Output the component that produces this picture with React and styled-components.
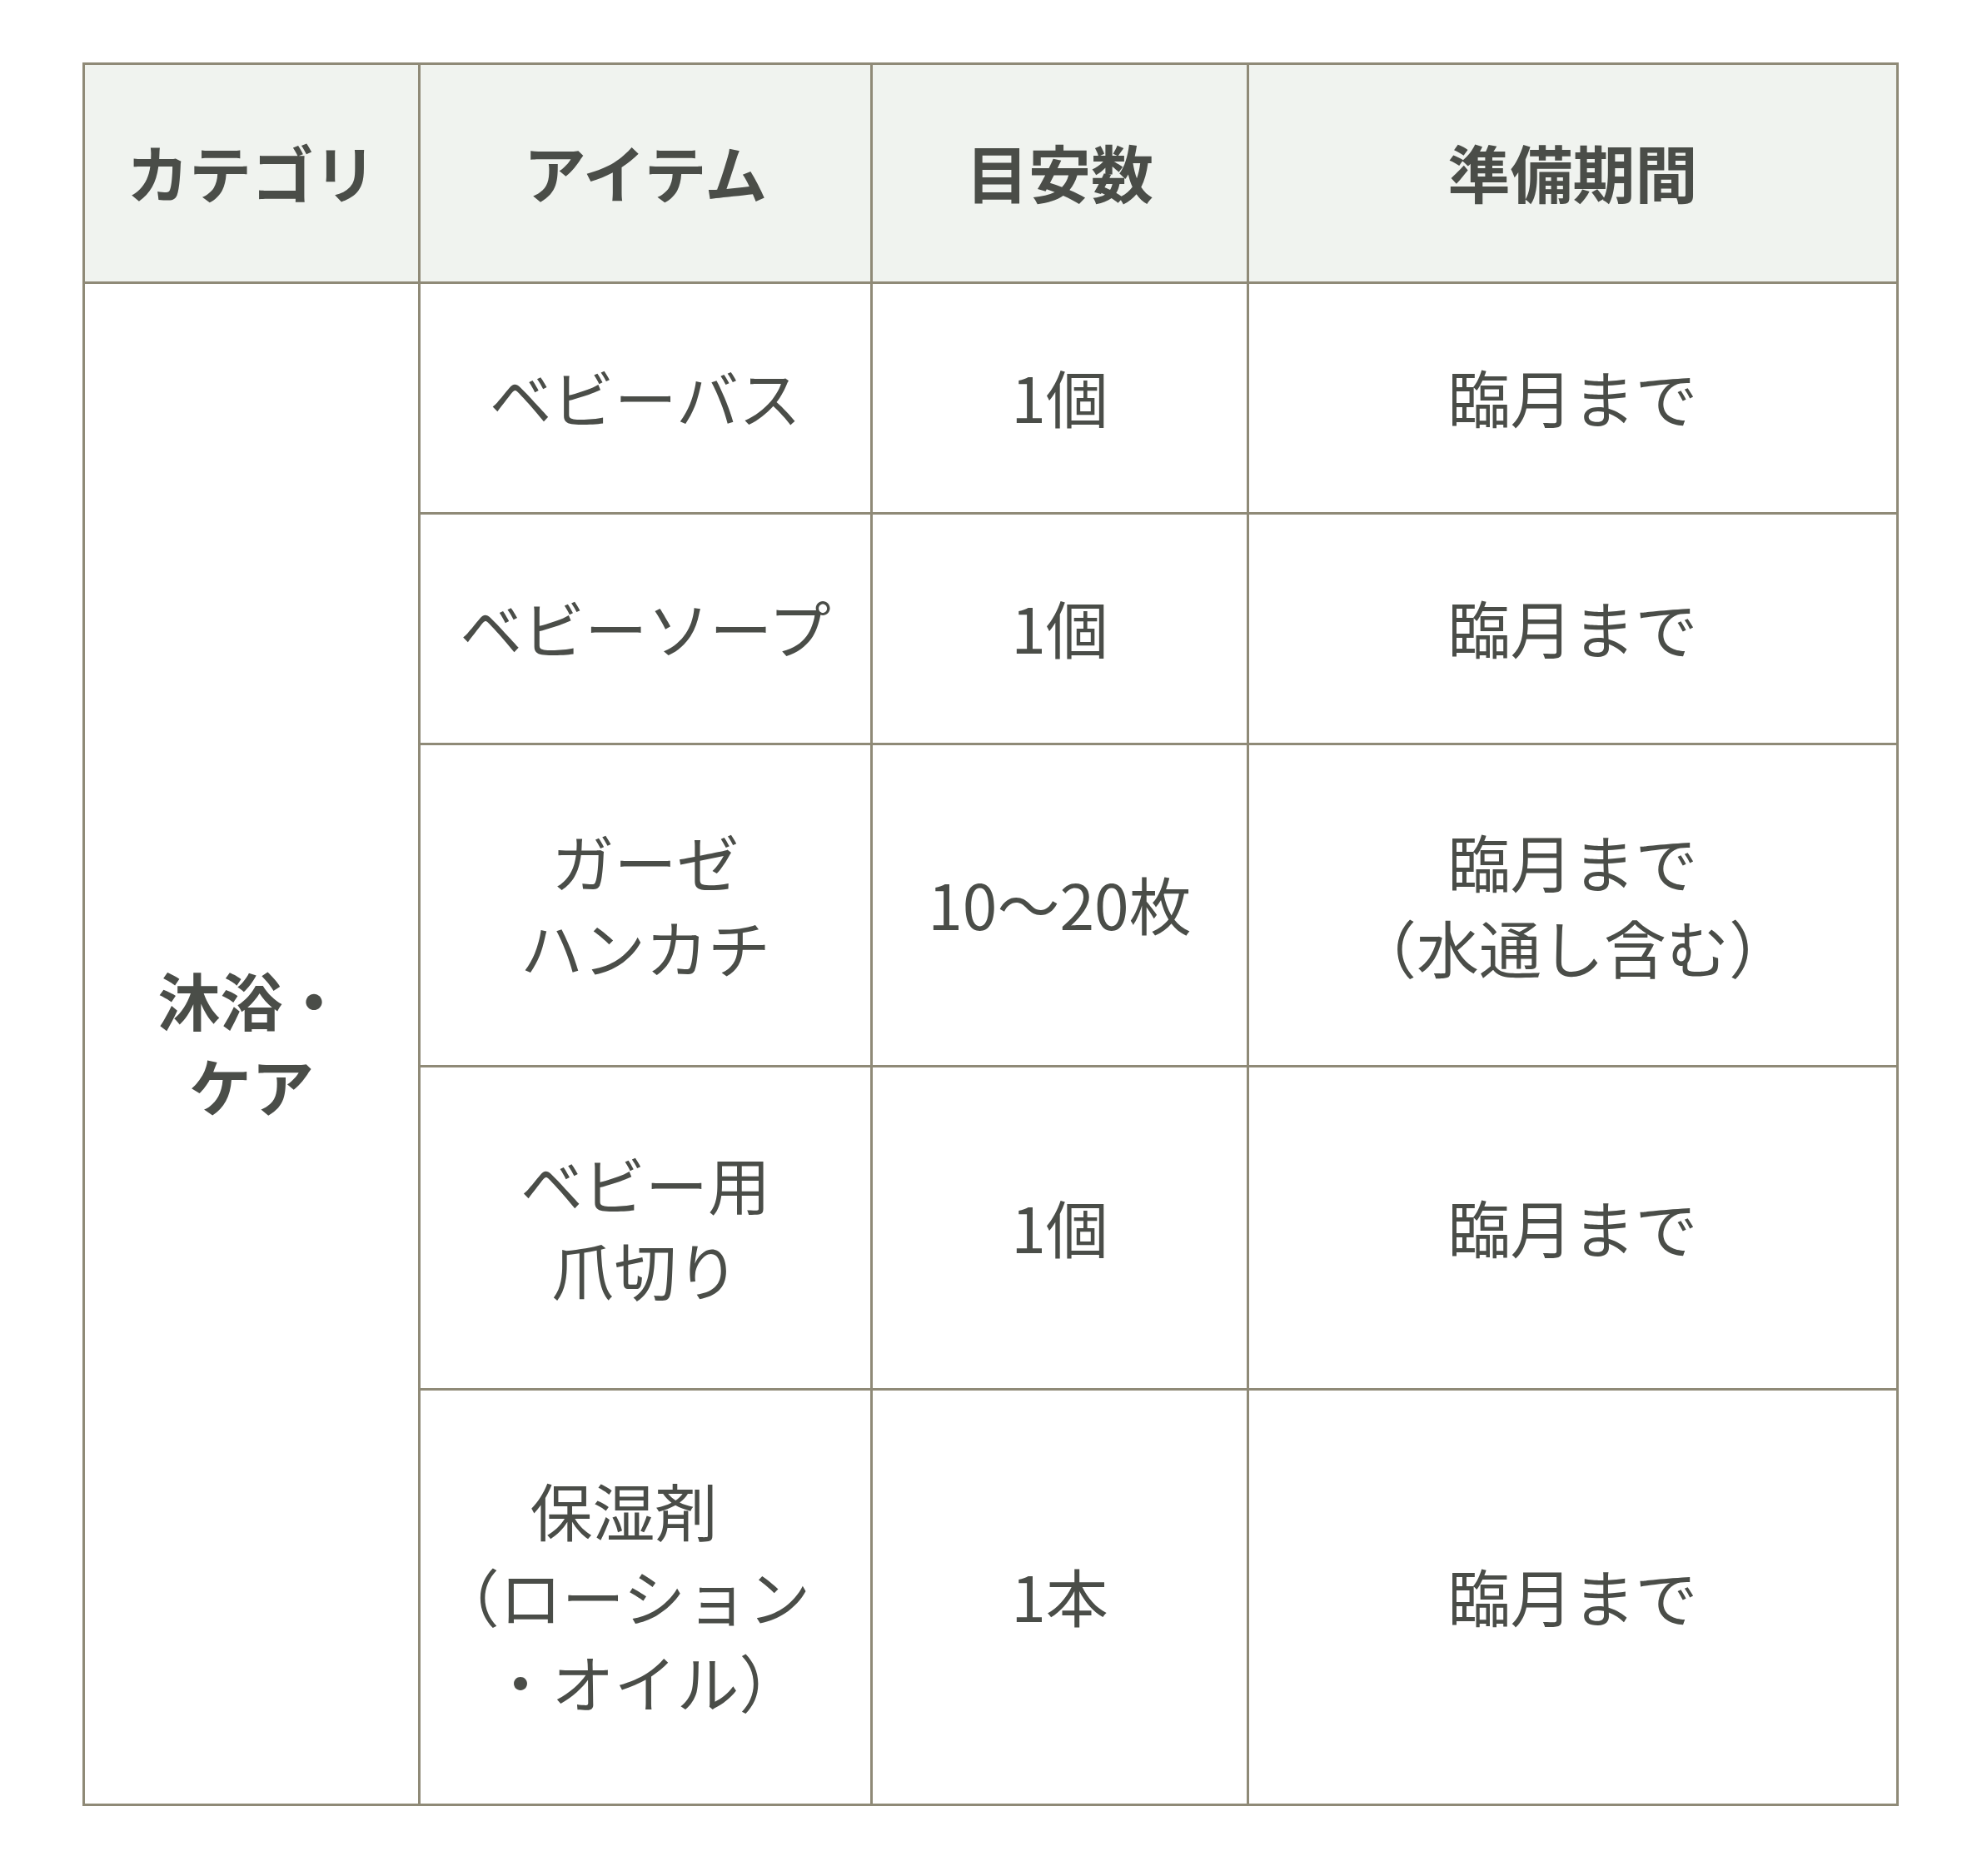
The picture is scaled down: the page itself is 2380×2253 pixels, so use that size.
import React from "react";
import styled, { createGlobalStyle } from "styled-components";

const Global = createGlobalStyle`
  html, body {
    margin: 0;
    padding: 0;
    background: #ffffff;
  }
  body {
    font-family: "Noto Sans CJK JP", "Noto Sans", sans-serif;
    color: #4a4d48;
  }
`;

const Page = styled.div`
  padding: 75px 0 84px 99px;
`;

const Table = styled.div`
  display: grid;
  width: max-content;
  grid-template-columns: 400px 540px 449px 777px;
  grid-template-rows: 260px 274px 274px 384px 385px 496px;
  gap: 3px;
  padding: 3px;
  background: #8f8a77;
`;

const Cell = styled.div`
  display: flex;
  flex-direction: column;
  align-items: center;
  justify-content: center;
  padding-bottom: 5px;
  text-align: center;
  font-size: 75px;
  line-height: 103px;
  font-weight: ${(p) => (p.$bold ? 700 : 400)};
  background: ${(p) => (p.$head ? "#f0f3ef" : "#ffffff")};
  color: #4a4d48;
  white-space: nowrap;
`;

const CategoryCell = styled(Cell)`
  grid-column: 1;
  grid-row: 2 / span 5;
`;

const Line = styled.span`
  display: block;
  padding-right: ${(p) => p.$trail || 0}px;
`;

const headers = ["カテゴリ", "アイテム", "目安数", "準備期間"];

const rows = [
  { item: [["ベビーバス"]], qty: "1個", when: [["臨月まで"]] },
  { item: [["ベビーソープ"]], qty: "1個", when: [["臨月まで"]] },
  { item: [["ガーゼ"], ["ハンカチ"]], qty: "10〜20枚", when: [["臨月まで"], ["（水通し含む）"]] },
  { item: [["ベビー用"], ["爪切り"]], qty: "1個", when: [["臨月まで"]] },
  {
    item: [["保湿剤", 52], ["（ローション", 52], ["・オイル）"]],
    qty: "1本",
    when: [["臨月まで"]],
  },
];

const Lines = ({ lines }) =>
  lines.map(([text, trail], i) => (
    <Line key={i} $trail={trail}>
      {text}
    </Line>
  ));

export default function App() {
  return (
    <>
      <Global />
      <Page>
        <Table>
          {headers.map((h) => (
            <Cell key={h} $head $bold>
              {h}
            </Cell>
          ))}
          <CategoryCell $bold>
            <Line>沐浴・</Line>
            <Line>ケア</Line>
          </CategoryCell>
          {rows.map((r, i) => (
            <React.Fragment key={i}>
              <Cell>
                <Lines lines={r.item} />
              </Cell>
              <Cell>{r.qty}</Cell>
              <Cell>
                <Lines lines={r.when} />
              </Cell>
            </React.Fragment>
          ))}
        </Table>
      </Page>
    </>
  );
}
